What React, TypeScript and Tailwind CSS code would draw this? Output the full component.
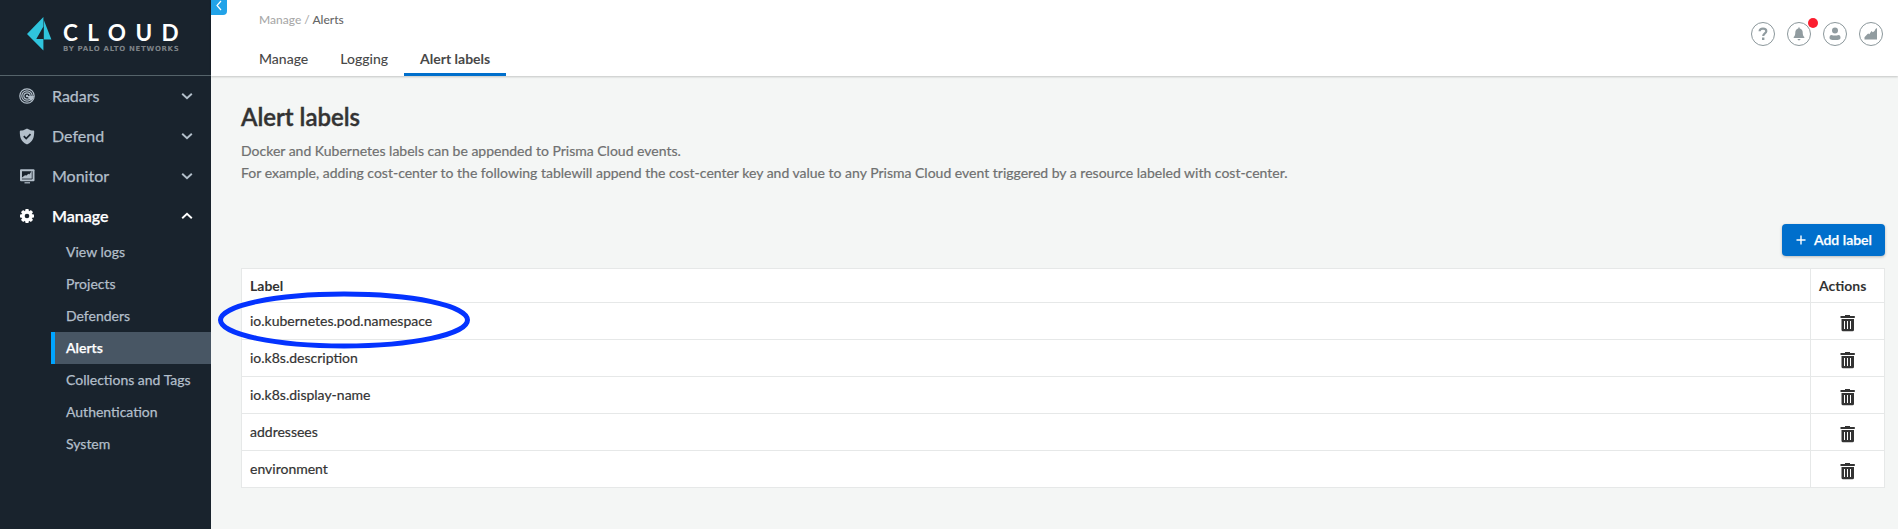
import type { ReactNode } from "react";

function RadarIcon() {
  return (
    <svg width="16" height="16" viewBox="0 0 16 16" fill="none" stroke="currentColor">
      <circle cx="8" cy="8" r="7.200" strokeWidth="1.200" />
      <circle cx="8" cy="8" r="5.200" strokeWidth="1.200" />
      <circle cx="8" cy="8" r="3.200" strokeWidth="1.200" />
      <circle cx="8" cy="8" r="1.200" fill="currentColor" stroke="none" />
      <path d="M8 8h7a7 7 0 0 1-3 5z" fill="currentColor" stroke="none" />
    </svg>
  );
}

function ShieldIcon() {
  return (
    <svg width="16" height="17" viewBox="0 0 16 17">
      <path
        fill="currentColor"
        d="M7.600.7a1 1 0 0 1 .8 0C10.700 2 12.600 2.500 14.200 2.600c.6 0 1 .4 1 .9 0 6.500-1.500 10-6.700 12.700a1.200 1.200 0 0 1-1 0C2.300 13.500.8 10 .8 3.500c0-.5.4-.9 1-.9C3.400 2.500 5.300 2 7.600.7z"
      />
      <path d="M4.800 8.200l2.400 2.400 4.300-4.400" fill="none" stroke="#19232d" strokeWidth="1.700" />
    </svg>
  );
}

function MonitorIcon() {
  return (
    <svg width="16" height="16" viewBox="0 0 16 16">
      <rect x="1" y="1.200" width="14.500" height="12" rx="1" fill="currentColor" />
      <path fill="#19232d" d="M3 9.500V3.200h9.500l-1.500 2.300-.8.900-.8-.6-1.900 1.700-1.500-.3z" />
      <path stroke="#19232d" strokeWidth=".8" d="M3 11h10.200V3.200" fill="none" />
      <path fill="currentColor" d="M5.500 14.200h5.500v1.200H5.500z" />
    </svg>
  );
}

function GearIcon() {
  return (
    <svg width="16" height="16" viewBox="0 0 16 16">
      <g fill="currentColor">
        <rect x="6.200" y="1" width="3.600" height="14" rx="1" />
        <rect x="6.200" y="1" width="3.600" height="14" rx="1" transform="rotate(45 8 8)" />
        <rect x="6.200" y="1" width="3.600" height="14" rx="1" transform="rotate(90 8 8)" />
        <rect x="6.200" y="1" width="3.600" height="14" rx="1" transform="rotate(135 8 8)" />
        <circle cx="8" cy="8" r="5.200" />
      </g>
      <circle cx="8" cy="8" r="2.300" fill="#19232d" />
    </svg>
  );
}

function Chevron({ up = false }: { up?: boolean }) {
  return (
    <svg width="12" height="8" viewBox="0 0 12 8" fill="none" stroke="currentColor" strokeWidth="1.900">
      <path d={up ? "M1.200 6.300L6 1.700l4.800 4.600" : "M1.200 1.700L6 6.300l4.800-4.600"} />
    </svg>
  );
}

function TrashIcon() {
  return (
    <svg width="16" height="17" viewBox="0 0 16 17">
      <path
        fill="#333"
        fillRule="evenodd"
        d="M.5 1H5V0h5v1h4.800v2H.5zM1.500 4h12.500v10.700a1.500 1.500 0 0 1-1.500 1.500H3a1.500 1.500 0 0 1-1.500-1.500zM4 6v8h1V6zM7 6v8h1V6zM10 6v8h1V6z"
      />
    </svg>
  );
}

function Logo() {
  return (
    <svg width="25" height="34" viewBox="0 0 25 34" fill="#2fc4dd">
      <path d="M16.400 0v9.500L9.300 22h7.100v11.500L0 17z" />
      <path d="M16.800 3l7.600 19.400h-7.600z" />
    </svg>
  );
}

function RoundButton({ children, dot = false }: { children: ReactNode; dot?: boolean }) {
  return (
    <span className="relative flex h-6 w-6 items-center justify-center rounded-full border border-[#8b979b] text-[#919ca0]">
      {children}
      {dot && <span className="absolute -right-2 -top-[5px] h-2.5 w-2.5 rounded-full bg-[#fb1e2f]" />}
    </span>
  );
}

const sections = [
  { name: "Radars", icon: <RadarIcon /> },
  { name: "Defend", icon: <ShieldIcon /> },
  { name: "Monitor", icon: <MonitorIcon /> },
  { name: "Manage", icon: <GearIcon />, open: true },
];

const pages = ["View logs", "Projects", "Defenders", "Alerts", "Collections and Tags", "Authentication", "System"];

const labels = ["io.kubernetes.pod.namespace", "io.k8s.description", "io.k8s.display-name", "addressees", "environment"];

function Sidebar() {
  return (
    <aside className="w-[211px] shrink-0 bg-[#19232d] text-[#b3bfca]">
      <div className="flex h-[76px] border-b border-[#55636a] pl-[27px] pt-[17px]">
        <Logo />
        <div className="pl-[11px] pt-[3px]">
          <div className="h-[25px] whitespace-nowrap text-[22.500px] font-bold leading-[25px] tracking-[9.400px] text-white">
            CLOUD
          </div>
          <div className="whitespace-nowrap font-['DejaVu_Sans',sans-serif] text-[7px] font-bold leading-[9px] tracking-[0.700px] text-[#7d8287]">
            BY PALO ALTO NETWORKS
          </div>
        </div>
      </div>
      <nav className="[-webkit-text-stroke:0.25px]">
        {sections.map((s) => (
          <div
            key={s.name}
            className={
              s.open
                ? "flex h-10 items-center pl-[19px] pr-[18px] text-white"
                : "flex h-10 items-center pl-[19px] pr-[18px]"
            }
          >
            {s.icon}
            <span className={s.open ? "ml-[17px] flex-1 font-semibold" : "ml-[17px] flex-1"}>{s.name}</span>
            <Chevron up={s.open} />
          </div>
        ))}
        <ul className="pl-[51px] text-sm">
          {pages.map((p) => (
            <li
              key={p}
              className={
                p === "Alerts"
                  ? "flex h-8 items-center border-l-4 border-[#00a4ff] bg-[#485664] pl-[11px] font-semibold text-white"
                  : "flex h-8 items-center pl-[15px]"
              }
            >
              {p}
            </li>
          ))}
        </ul>
      </nav>
    </aside>
  );
}

function Header() {
  return (
    <header className="relative flex h-[76px] justify-between bg-white pr-[15px] shadow-[0_1px_2px_rgba(0,0,0,0.2)]">
      <button className="absolute left-0 top-0 flex h-[15px] w-4 justify-center rounded-br bg-[#22a3e8]">
        <svg width="8" height="11" viewBox="0 0 8 11" fill="none" stroke="white" strokeWidth="1.200">
          <path d="M6 1L2 5.500 6 10" />
        </svg>
      </button>
      <div className="flex flex-col justify-between pl-8 pt-3">
        <div className="pl-4 text-xs font-medium leading-4 text-[#a9a9a9]">
          Manage / <span className="text-[#666]">Alerts</span>
        </div>
        <nav className="flex text-sm font-medium text-[#484848]">
          <span className="h-[34px] px-4 leading-[34px]">Manage</span>
          <span className="h-[34px] px-4 leading-[34px]">Logging</span>
          <span className="h-[34px] border-b-[3px] border-[#006fcc] px-4 font-bold leading-[34px]">Alert labels</span>
        </nav>
      </div>
      <div className="flex gap-3 pt-[22px]">
        <RoundButton>
          <svg width="10" height="14" viewBox="0 0 10 14" fill="none" stroke="currentColor">
            <path d="M1.600 4.200C1.700 2.600 3 1.700 5 1.700s3.300 1 3.300 2.500C8.300 6.500 5.200 6.300 5.200 9" strokeWidth="2.200" />
            <path d="M5.200 10.500v2.500" strokeWidth="2.400" />
          </svg>
        </RoundButton>
        <RoundButton dot>
          <svg width="12" height="14" viewBox="0 0 12 14" fill="currentColor">
            <path d="M5.300.5h1.400v1C8.700 2 9.700 3.500 9.700 5.500c0 2.500.5 3.300 1.600 4.500v1H.7v-1c1.100-1.200 1.600-2 1.600-4.500 0-2 1-3.500 3-4zM4.500 12h3c-.2 1.900-2.800 1.900-3 0z" />
          </svg>
        </RoundButton>
        <RoundButton>
          <svg width="12" height="14" viewBox="0 0 12 14" fill="currentColor">
            <circle cx="6" cy="3.500" r="3" />
            <path d="M2.500 8C4.500 8.800 7.500 8.800 9.500 8c1.300.2 2 1.200 2 2.700 0 1.700-1.500 2.300-5.500 2.300S.5 12.400.5 10.700C.5 9.200 1.200 8.200 2.500 8z" />
          </svg>
        </RoundButton>
        <RoundButton>
          <svg width="14" height="14" viewBox="0 0 14 14" fill="currentColor">
            <path d="M.5 12.500v-2.200L3.500 7l.8-.6 1 .8L7.500 4l1.300 1.200L10.500 4l1-2 1.500-1v11.500z" />
          </svg>
        </RoundButton>
      </div>
    </header>
  );
}

function LabelTable() {
  return (
    <div className="relative mt-3 border border-[#e6e8e8] bg-white text-sm text-[#333]">
      <div className="flex h-[33px] items-center font-bold">
        <span className="flex-1 pl-2">Label</span>
        <span className="flex h-full w-[74px] items-center border-l border-[#e6e8e8] pl-2">Actions</span>
      </div>
      {labels.map((label) => (
        <div key={label} className="flex h-[37px] items-center border-t border-[#e6e8e8]">
          <span className="flex-1 pl-2 [-webkit-text-stroke:0.2px]">{label}</span>
          <span className="flex h-full w-[74px] items-center justify-center border-l border-[#e6e8e8] pl-px pt-[5px]">
            <TrashIcon />
          </span>
        </div>
      ))}
      <svg className="absolute -left-[25px] top-[21px]" width="254" height="60" viewBox="0 0 254 60" fill="none">
        <ellipse cx="127" cy="30" rx="123.500" ry="26" stroke="#0433ff" strokeWidth="5" />
      </svg>
    </div>
  );
}

export default function App() {
  return (
    <div className="flex h-[529px] w-full overflow-hidden bg-[#f4f6f5] font-[Lato,sans-serif]">
      <Sidebar />
      <div className="min-w-0 flex-1">
        <Header />
        <main className="pl-[30px] pr-[13px] pt-[25px]">
          <h1 className="text-2xl font-semibold leading-8 text-[#333] [-webkit-text-stroke:0.4px]">Alert labels</h1>
          <div className="mt-[7px] text-sm leading-[22px] text-[#6f7070] [-webkit-text-stroke:0.2px]">
            <p>Docker and Kubernetes labels can be appended to Prisma Cloud events.</p>
            <p>
              For example, adding cost-center to the following tablewill append the cost-center key and value to any
              Prisma Cloud event triggered by a resource labeled with cost-center.
            </p>
          </div>
          <div className="mt-10 flex justify-end">
            <button className="flex h-8 w-[103px] items-center rounded bg-[#006fcc] pl-3.5 text-sm font-semibold text-white shadow-[0_1px_3px_rgba(0,0,0,0.25)]">
              <svg width="10" height="10" viewBox="0 0 10 10" stroke="white" strokeWidth="1.400">
                <path d="M5 .5v9M.5 5h9" />
              </svg>
              <span className="ml-2 [-webkit-text-stroke:0.25px]">Add label</span>
            </button>
          </div>
          <LabelTable />
        </main>
      </div>
    </div>
  );
}
